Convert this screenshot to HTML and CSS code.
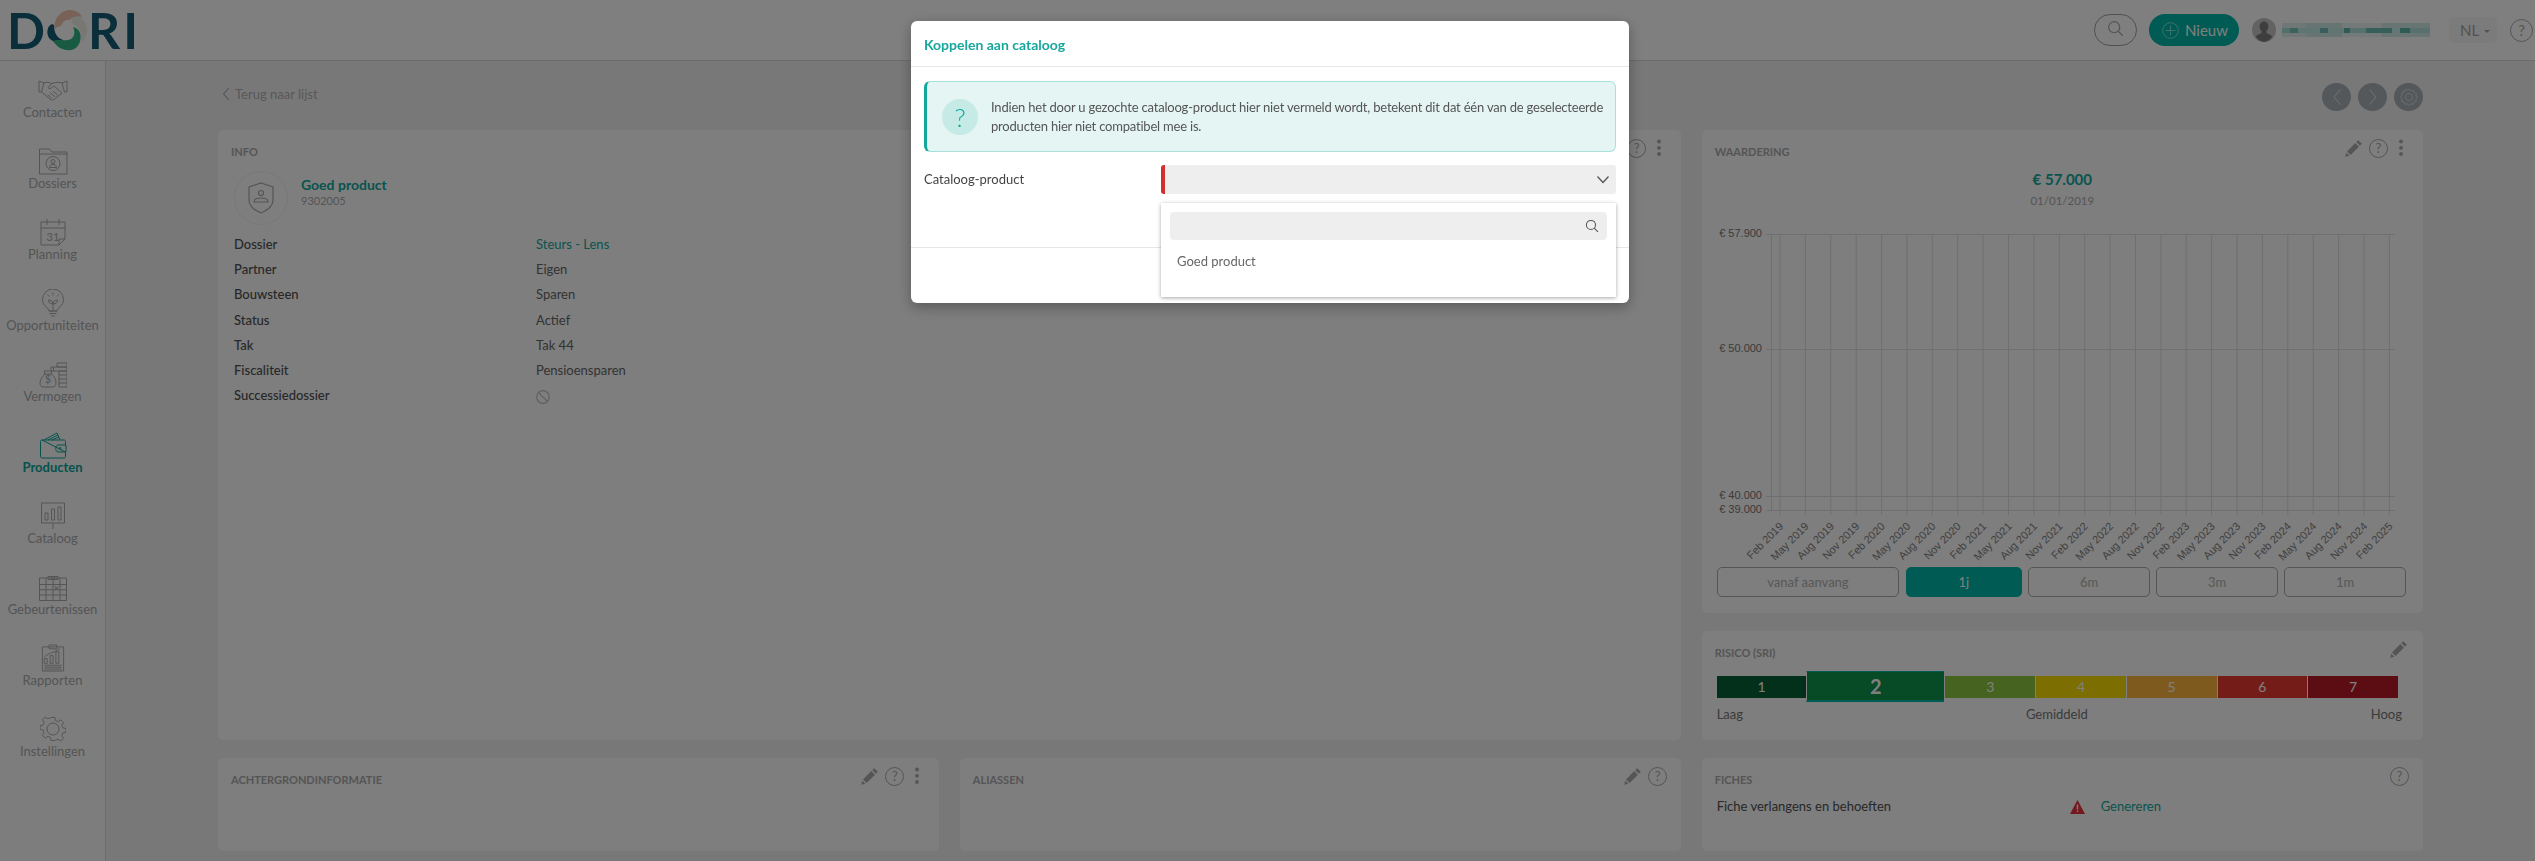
FILE: index.html
```html
<!DOCTYPE html>
<html lang="nl">
<head>
    <meta charset="UTF-8">
    <title>Koppelen aan cataloog</title>
    <link rel="stylesheet" href="styles.css">
</head>
<body>

    <svg class="sprites" width="0" height="0">
        <symbol id="pencil" viewBox="0 0 20 20"><path d="M14.2 2.2l3.6 3.6-1.9 1.9-3.6-3.6zM11.3 5.1l3.6 3.6-8.3 8.3-3.6-3.6zM2.2 14.7l3.1 3.1-4.1 1z"/></symbol>
        <symbol id="dots" viewBox="0 0 16 20"><circle cx="8" cy="3.5" r="1.9"/><circle cx="8" cy="9.8" r="1.9"/><circle cx="8" cy="16" r="1.9"/></symbol>
        <symbol id="glass" viewBox="0 0 20 20"><circle cx="8.5" cy="8.5" r="6.5"/><path d="M13.2 13.2l5.3 5.3"/></symbol>
        <symbol id="left" viewBox="0 0 12 20"><path d="M9.5 2.5L3 10l6.5 7.5"/></symbol>
        <symbol id="right" viewBox="0 0 12 20"><path d="M2.5 2.5L9 10l-6.5 7.5"/></symbol>
    </svg>

    <header class="topbar">
        <div class="logo">
            <span class="logo-letter">D</span>
            <svg class="logo-ring" width="42" height="42" viewBox="0 0 42 42">
                <path class="ring-grey" d="M30 5C37 8 41 15 41 21C41 27 38 31 35 34C36 28 35 22 31 18C29 16 27 15 25 12Z"/>
                <path class="ring-dark" d="M6 15C1 17 0 24 3 29C6 33 12 34 17 31C11 29 8 24 8 16Z"/>
                <path class="ring-salmon" d="M9 20C7 10 15 1 24 1C30 1 34 4 36 8C31 6 26 8 24 11C20 10 16 13 15 17C13 17 11 18 9 20Z"/>
                <path class="ring-green" d="M7 32C12 40 20 42 25 41C33 40 36 30 34 24C33 21 31 19 27 18C30 24 28 30 22 31C16 32 11 30 7 32Z"/>
            </svg>
            <span class="logo-letter logo-rest">RI</span>
        </div>
        <div class="top-actions">
            <button class="search-pill"><svg class="stroke" width="17" height="17"><use href="#glass"/></svg></button>
            <button class="new-btn">
                <svg class="new-plus" width="17" height="17" viewBox="0 0 17 17"><circle cx="8.500" cy="8.500" r="7.800"/><path d="M8.500 3.500v10M3.500 8.500h10"/></svg>
                Nieuw
            </button>
            <svg class="user-pic" width="24" height="24" viewBox="0 0 24 24">
                <circle cx="12" cy="12" r="12" fill="#c4c4c4"/>
                <path fill="#7c7c7c" d="M12 3.500c3 0 4.500 2.500 4.300 5.300-.1 2-1 3.700-2 4.700v1.500c2.200 1 4.700 1.800 6 3.500A12 12 0 0 1 12 24a12 12 0 0 1-8.300-5.500c1.300-1.700 3.800-2.500 6-3.500v-1.500c-1-1-1.900-2.700-2-4.700C7.500 6 9 3.500 12 3.500z"/>
            </svg>
            <div class="user-name"></div>
            <div class="lang">NL <i class="caret"></i></div>
            <span class="help help-big">?</span>
        </div>
    </header>

    <div class="shell">
        <nav class="sidebar">
            <a class="nav-item">
                <svg class="nav-icon" width="30" height="28" viewBox="0 0 30 28"><path d="M1 5l5 2-2.500 9H1zM29 5l-5 2 2.500 9H29zM6 7c3-1.500 5-.5 8 .5l3.500-1c2.500-.5 4.500 0 6.500.5M14 7.500l-4 4c1 1.500 3 1.300 4.300-.3l2-1 7.700 7M3.500 16l8.500 7c2 1.300 3.300 1 4.300.3l7.700-6M9.500 18.500l4 3.500M12 16.500l5 4.300M15 15l4.500 4"/></svg>
                <span>Contacten</span>
            </a>
            <a class="nav-item">
                <svg class="nav-icon" width="30" height="28" viewBox="0 0 30 28"><path d="M1.500 27V2h10l2.500 3h15M1.500 7h27.500M29 5v22H1.500"/><circle cx="15" cy="16.500" r="7"/><circle cx="15" cy="14.500" r="2"/><path d="M11.500 20.500c0-2 1.500-3 3.500-3s3.500 1 3.500 3z"/></svg>
                <span>Dossiers</span>
            </a>
            <a class="nav-item">
                <svg class="nav-icon" width="28" height="28" viewBox="0 0 28 28"><path d="M2 4h24v17l-6 6H2zM2 10h24M8 1v6M20 1v6M26 21h-6v6"/><text x="14" y="23" class="nav-cal-num">31</text></svg>
                <span>Planning</span>
            </a>
            <a class="nav-item">
                <svg class="nav-icon" width="24" height="28" viewBox="0 0 24 28"><path d="M8 22c0-3-6.500-5-6.500-11.500a10.500 10.500 0 0 1 21 0C22.500 17 16 19 16 22zM8 22h8M8.500 24.500h7M10 27h4M12 21v-8M12 15c-3 0-4.500-1.500-4.500-4 2.500 0 4.500 1 4.500 4zM12 15c3 0 4.500-1.500 4.500-4-2.500 0-4.500 1-4.500 4zM12 3.500v3M6.500 5.500l1.500 2M17.500 5.500L16 7.500"/></svg>
                <span>Opportuniteiten</span>
            </a>
            <a class="nav-item">
                <svg class="nav-icon" width="28" height="28" viewBox="0 0 28 28"><path d="M6 14l-1-3h8l-1 3c3 2 5 5 5 9 0 2-1 4-3 4H4c-2 0-3-2-3-4 0-4 3-7 5-9zM6 14h6M12 7h16v4H12zM18 3h10v4H18zM20 11h8v16h-8zM20 15h8M20 19h8M20 23h8M14.500 7V11"/><text x="9" y="23" class="nav-cal-num">$</text></svg>
                <span>Vermogen</span>
            </a>
            <a class="nav-item active">
                <svg class="nav-icon" width="28" height="28" viewBox="0 0 28 28"><path d="M3 9h22c1 0 1.500.5 1.500 1.500V14M26.500 21v4.500c0 1-.500 1.500-1.500 1.500H3.500C2 27 1.500 26.500 1.500 25V10.500C1.500 9.500 2 9 3 9zM19 14h8v7h-8c-3 0-3-7 0-7zM5 9l13-7 3 7M9 9l10-5M13 9l7-3"/><circle cx="21" cy="17.500" r="1"/></svg>
                <span>Producten</span>
            </a>
            <a class="nav-item">
                <svg class="nav-icon" width="26" height="28" viewBox="0 0 26 28"><path d="M1.500 1h23v20h-23zM13 21v6M5 11h3v7H5zM11.500 7h3v11h-3zM18 5h3v13h-3z"/></svg>
                <span>Cataloog</span>
            </a>
            <a class="nav-item">
                <svg class="nav-icon" width="28" height="28" viewBox="0 0 28 28"><path d="M0.500 5h27v22.500H.5zM.5 11.500h27M.5 16.800h27M.5 22h27M7 5v22.500M14 5v22.500M21 5v22.500M9 3.500h10v3H9zM12.500 3v4M15.500 3v4M15.500 13.500l4 3M19.500 13.500l-4 3"/></svg>
                <span>Gebeurtenissen</span>
            </a>
            <a class="nav-item">
                <svg class="nav-icon" width="24" height="29" viewBox="0 0 24 29"><path d="M1 3h22v25H1zM8 1h8v4H8zM3 20V15h3v5zM9 20V12h3v8zM15 20V8h3v12zM3 13l7-4 4-1 5-3M3 22h18M3 24h18M3 26h18"/></svg>
                <span>Rapporten</span>
            </a>
            <a class="nav-item">
                <svg class="nav-icon" width="26" height="26" viewBox="0 0 26 26"><path d="M11 1h4l.7 3.300 2.600 1 2.900-1.800 2.800 2.800-1.800 2.900 1 2.600 3.300.7v4l-3.300.7-1 2.600 1.800 2.900-2.800 2.800-2.900-1.800-2.600 1L15 25h-4l-.7-3.300-2.600-1-2.900 1.800L2 19.700l1.800-2.900-1-2.600L-.5 13.500v-4l3.300-.7 1-2.600L2 3.300 4.800.5l2.900 1.800 2.600-1z" transform="translate(.5 .5) scale(.96)"/><circle cx="13" cy="13" r="6"/></svg>
                <span>Instellingen</span>
            </a>
        </nav>

        <main class="content">
            <div class="toolbar">
                <a class="back"><svg class="stroke" width="10" height="16"><use href="#left"/></svg> Terug naar lijst</a>
                <div class="round-btns">
                    <button class="round-btn"><svg class="stroke-light" width="12" height="20"><use href="#left"/></svg></button>
                    <button class="round-btn"><svg class="stroke-light" width="12" height="20"><use href="#right"/></svg></button>
                    <button class="round-btn">
                        <svg class="round-gear" width="18" height="18" viewBox="0 0 18 18"><circle cx="9" cy="9" r="3.500"/><path d="M9 1l1.800 1.700 2.400-.4.800 2.300 2.300.8-.4 2.400L17.500 9l-1.600 1.800.4 2.400-2.300.8-.8 2.300-2.400-.4L9 17.500l-1.800-1.600-2.400.4-.8-2.300-2.300-.8.4-2.400L.5 9l1.600-1.800-.4-2.400 2.300-.8.8-2.300 2.400.4z"/></svg>
                    </button>
                </div>
            </div>

            <div class="cards">
                <section class="card card-info">
                    <div class="card-head">
                        <h2>INFO</h2>
                        <div class="tools">
                            <svg class="tool-pencil" width="20" height="20"><use href="#pencil"/></svg>
                            <span class="help">?</span>
                            <svg class="tool-dots" width="16" height="20"><use href="#dots"/></svg>
                        </div>
                    </div>
                    <div class="product">
                        <div class="product-pic">
                            <svg class="product-shield" width="26" height="32" viewBox="0 0 26 32"><path d="M13 1l12 4v13c0 6-5 10-12 13C6 28 1 24 1 18V5z"/><circle cx="13" cy="11" r="2.500"/><path d="M6 20c0-3 3-4 7-4s7 1 7 4z"/></svg>
                        </div>
                        <div>
                            <div class="product-name">Goed product</div>
                            <div class="product-nr">9302005</div>
                        </div>
                    </div>
                    <dl class="facts">
                        <dt>Dossier</dt><dd class="link">Steurs - Lens</dd>
                        <dt>Partner</dt><dd>Eigen</dd>
                        <dt>Bouwsteen</dt><dd>Sparen</dd>
                        <dt>Status</dt><dd>Actief</dd>
                        <dt>Tak</dt><dd>Tak 44</dd>
                        <dt>Fiscaliteit</dt><dd>Pensioensparen</dd>
                        <dt>Successiedossier</dt>
                        <dd><svg class="ban" width="14" height="14" viewBox="0 0 14 14"><circle cx="7" cy="7" r="6.300"/><path d="M2.600 2.600l8.800 8.800"/></svg></dd>
                    </dl>
                </section>

                <section class="card card-value">
                    <div class="card-head">
                        <h2>WAARDERING</h2>
                        <div class="tools">
                            <svg class="tool-pencil" width="20" height="20"><use href="#pencil"/></svg>
                            <span class="help">?</span>
                            <svg class="tool-dots" width="16" height="20"><use href="#dots"/></svg>
                        </div>
                    </div>
                    <div class="value">€ 57.000</div>
                    <div class="value-date">01/01/2019</div>
                    <svg class="chart" width="721" height="340" viewBox="0 0 721 340">
                        <g class="grid">
                            <path d="M69.500 9V285M78 9V290M103.400 9V290M128.800 9V290M154.200 9V290M179.600 9V290M205 9V290M230.300 9V290M255.700 9V290M281.100 9V290M306.500 9V290M331.900 9V290M357.300 9V290M382.700 9V290M408.100 9V290M433.500 9V290M458.900 9V290M484.200 9V290M509.600 9V290M535 9V290M560.400 9V290M585.800 9V290M611.200 9V290M636.600 9V290M662 9V290M687.400 9V290"/>
                            <path d="M64 9.500H693M64 124.500H693M64 271.500H693M64 285.500H693"/>
                        </g>
                        <g class="y-labels">
                            <text x="60" y="12">€ 57.900</text>
                            <text x="60" y="127">€ 50.000</text>
                            <text x="60" y="274">€ 40.000</text>
                            <text x="60" y="288">€ 39.000</text>
                        </g>
                        <g class="x-labels">
                            <text transform="translate(82 302) rotate(-45)">Feb 2019</text>
                            <text transform="translate(107.400 302) rotate(-45)">May 2019</text>
                            <text transform="translate(132.800 302) rotate(-45)">Aug 2019</text>
                            <text transform="translate(158.200 302) rotate(-45)">Nov 2019</text>
                            <text transform="translate(183.600 302) rotate(-45)">Feb 2020</text>
                            <text transform="translate(209 302) rotate(-45)">May 2020</text>
                            <text transform="translate(234.300 302) rotate(-45)">Aug 2020</text>
                            <text transform="translate(259.700 302) rotate(-45)">Nov 2020</text>
                            <text transform="translate(285.100 302) rotate(-45)">Feb 2021</text>
                            <text transform="translate(310.500 302) rotate(-45)">May 2021</text>
                            <text transform="translate(335.900 302) rotate(-45)">Aug 2021</text>
                            <text transform="translate(361.300 302) rotate(-45)">Nov 2021</text>
                            <text transform="translate(386.700 302) rotate(-45)">Feb 2022</text>
                            <text transform="translate(412.100 302) rotate(-45)">May 2022</text>
                            <text transform="translate(437.500 302) rotate(-45)">Aug 2022</text>
                            <text transform="translate(462.900 302) rotate(-45)">Nov 2022</text>
                            <text transform="translate(488.200 302) rotate(-45)">Feb 2023</text>
                            <text transform="translate(513.600 302) rotate(-45)">May 2023</text>
                            <text transform="translate(539 302) rotate(-45)">Aug 2023</text>
                            <text transform="translate(564.400 302) rotate(-45)">Nov 2023</text>
                            <text transform="translate(589.800 302) rotate(-45)">Feb 2024</text>
                            <text transform="translate(615.200 302) rotate(-45)">May 2024</text>
                            <text transform="translate(640.600 302) rotate(-45)">Aug 2024</text>
                            <text transform="translate(666 302) rotate(-45)">Nov 2024</text>
                            <text transform="translate(691.400 302) rotate(-45)">Feb 2025</text>
                        </g>
                    </svg>
                    <div class="ranges">
                        <button class="range">vanaf aanvang</button>
                        <button class="range active">1j</button>
                        <button class="range">6m</button>
                        <button class="range">3m</button>
                        <button class="range">1m</button>
                    </div>
                </section>

                <section class="card card-risk">
                    <div class="card-head">
                        <h2>RISICO (SRI)</h2>
                        <div class="tools">
                            <svg class="tool-pencil" width="20" height="20"><use href="#pencil"/></svg>
                        </div>
                    </div>
                    <div class="risk-bar">
                        <div class="risk r1">1</div>
                        <div class="risk r2">2</div>
                        <div class="risk r3">3</div>
                        <div class="risk r4">4</div>
                        <div class="risk r5">5</div>
                        <div class="risk r6">6</div>
                        <div class="risk r7">7</div>
                    </div>
                    <div class="risk-legend"><span>Laag</span><span>Gemiddeld</span><span>Hoog</span></div>
                </section>

                <section class="card">
                    <div class="card-head">
                        <h2>ACHTERGRONDINFORMATIE</h2>
                        <div class="tools">
                            <svg class="tool-pencil" width="20" height="20"><use href="#pencil"/></svg>
                            <span class="help">?</span>
                            <svg class="tool-dots" width="16" height="20"><use href="#dots"/></svg>
                        </div>
                    </div>
                </section>

                <section class="card">
                    <div class="card-head">
                        <h2>ALIASSEN</h2>
                        <div class="tools">
                            <svg class="tool-pencil" width="20" height="20"><use href="#pencil"/></svg>
                            <span class="help">?</span>
                        </div>
                    </div>
                </section>

                <section class="card">
                    <div class="card-head">
                        <h2>FICHES</h2>
                        <div class="tools"><span class="help">?</span></div>
                    </div>
                    <div class="fiche-row">
                        <span class="fiche-name">Fiche verlangens en behoeften</span>
                        <svg class="warn" width="15" height="14" viewBox="0 0 15 14"><path d="M7.500 0L15 14H0z"/><path class="warn-mark" d="M6.800 4.500h1.400v5H6.800zM6.800 10.500h1.400V12H6.800z"/></svg>
                        <a class="link">Genereren</a>
                    </div>
                </section>
            </div>
        </main>
    </div>

    <div class="overlay"></div>

    <div class="modal">
        <div class="modal-head">Koppelen aan cataloog</div>
        <div class="modal-body">
            <div class="notice">
                <span class="notice-icon">?</span>
                <p>Indien het door u gezochte cataloog-product hier niet vermeld wordt, betekent dit dat één van de geselecteerde producten hier niet compatibel mee is.</p>
            </div>
            <div class="field">
                <label>Cataloog-product</label>
                <div class="select">
                    <svg class="chevron" width="14" height="9" viewBox="0 0 14 9"><path d="M1.500 1.500L7 7.500l5.500-6"/></svg>
                    <div class="dropdown">
                        <div class="dropdown-search">
                            <svg class="glass-dark" width="14" height="14" viewBox="0 0 20 20"><use href="#glass"/></svg>
                        </div>
                        <div class="dropdown-item">Goed product</div>
                    </div>
                </div>
            </div>
        </div>
        <div class="modal-foot"></div>
    </div>

</body>
</html>
```

FILE: styles.css
```css
body {
    margin: 0; height: 861px; overflow: hidden;
    background: #f0f0f0;
    font-family: 'Lato', sans-serif;
    font-size: 13px; color: #555;
}

.sprites { position: absolute; }
button { font-family: inherit; cursor: pointer; }

/* Dim layer + modal */
.overlay { position: fixed; top: 0; right: 0; bottom: 0; left: 0; background: rgba(0,0,0,0.5); z-index: 50; }

.modal {
    position: fixed; top: 21px; left: 911px; z-index: 60;
    width: 718px; height: 282px;
    background: #fff; border-radius: 6px;
    box-shadow: 0 4px 14px rgba(0,0,0,0.3);
}
.modal-head {
    height: 46px; box-sizing: border-box; padding: 15px 13px 0;
    border-bottom: 1px solid #e6e6e6;
    color: #17a79d; font-weight: 700; font-size: 14px;
}
.modal-body { height: 180px; box-sizing: border-box; padding: 14px 13px 0; }
.modal-foot { border-top: 1px solid #e6e6e6; }

.notice {
    display: flex; align-items: center; gap: 13px;
    height: 71px; box-sizing: border-box; padding: 0 6px 0 15px;
    background: #e4f5f3; border: 1px solid #a8e0da; border-left: 3px solid #12a89d;
    border-radius: 6px;
}
.notice-icon {
    flex: none; width: 36px; height: 36px; border-radius: 50%;
    background: #c6ebe7; color: #12a89d;
    font-size: 26px; font-weight: 300; line-height: 36px; text-align: center;
}
.notice p { margin: 0; font-size: 13px; line-height: 19px; color: #555; letter-spacing: -0.2px; }

.field { display: flex; margin-top: 13px; }
.field label { width: 237px; flex: none; line-height: 29px; color: #444; }
.select {
    position: relative; width: 455px; height: 29px; box-sizing: border-box;
    background: #eee; border-left: 4px solid #d32f2f; border-radius: 3px;
}
.chevron { position: absolute; right: 6px; top: 10px; fill: none; stroke: #555; stroke-width: 1.3; }
.dropdown {
    position: absolute; left: -4px; top: 38px; width: 455px; height: 94px;
    box-sizing: border-box; padding: 9px;
    background: #fff; box-shadow: 0 1px 4px rgba(0,0,0,0.35);
}
.dropdown-search { position: relative; height: 28px; background: #eee; border-radius: 4px; }
.glass-dark { position: absolute; right: 8px; top: 7px; fill: none; stroke: #555; stroke-width: 1.5; }
.dropdown-item { padding: 13px 7px; font-size: 13px; line-height: 16px; color: #666; }

/* Top bar */
.topbar {
    height: 60px; display: flex; justify-content: space-between; align-items: center;
    background: #fff; border-bottom: 1px solid #d8d8d8;
}
.logo { display: flex; align-items: center; padding-left: 7px; }
.logo-letter { font-size: 50px; font-weight: 700; line-height: 50px; color: #165e74; }
.logo-rest { letter-spacing: 3px; margin-left: 0; }
.logo-ring { margin: 0 0 0 1px; }
.ring-grey { fill: #efefe6; }
.ring-dark { fill: #165e74; }
.ring-salmon { fill: #f0c2ae; }
.ring-green { fill: #32b684; }

.top-actions { display: flex; align-items: center; height: 100%; padding-right: 2px; }
.search-pill {
    width: 43px; height: 32px; padding: 0; margin-right: 12px;
    background: transparent; border: 1px solid #a0a0a0; border-radius: 16px;
}
.stroke { fill: none; stroke: #a8a8a8; stroke-width: 1.4; }
.new-btn {
    display: flex; align-items: center; gap: 6px;
    width: 90px; height: 32px; padding: 0 0 0 13px; margin-right: 13px;
    background: #00b6a8; color: #fff; border: none; border-radius: 16px;
    font-size: 15px;
}
.new-plus { fill: none; stroke: #7fe0d6; stroke-width: 1; }
.user-pic { margin-right: 6px; }
.user-name {
    width: 148px; height: 14px; margin-right: 19px;
    background:
        linear-gradient(to right, #a8dcd8 0 8px, #78c4bc 8px 16px, #c0e8e4 16px 38px, #70bab4 38px 46px, #c0e8e4 46px 62px, #60b4ac 62px 68px, #b0e0dc 68px 84px, #6cbcb4 84px 110px, #c8ecea 110px 118px, #60b4ac 118px 128px, #b0e0dc 128px 148px) 0 5px / 100% 5px no-repeat,
        linear-gradient(to right, #e0f0ee 0 24px, #cce8e4 24px 60px, #e8f4f2 60px 100px, #d0eae6 100px 148px);
}
.lang {
    width: 48px; height: 26px; margin-right: 13px; box-sizing: border-box;
    padding-left: 11px; line-height: 26px;
    background: #f6f6f6; border-radius: 5px;
    font-size: 15px; color: #a4a4a4;
}
.caret {
    display: inline-block; margin-left: 1px; vertical-align: 3px;
    border-top: 3px solid #a4a4a4; border-left: 3px solid transparent; border-right: 3px solid transparent;
}
.help {
    display: inline-block; width: 19px; height: 19px; flex: none; box-sizing: border-box;
    border: 1px solid #aaa; border-radius: 50%;
    font-size: 13px; line-height: 17px; text-align: center; color: #aaa;
}
.help-big { width: 23px; height: 23px; font-size: 15px; line-height: 21px; }

.shell { display: flex; height: 800px; }

/* Sidebar */
.sidebar {
    width: 106px; flex: none; box-sizing: border-box; padding-top: 15px;
    display: flex; flex-direction: column; gap: 26px;
    background: #fafafa; border-right: 1px solid #d8d8d8;
}
.nav-item { display: flex; flex-direction: column; align-items: center; color: #aaa; line-height: 17px; height: 45px; white-space: nowrap; }
.nav-icon { height: 28px; fill: none; stroke: #aaa; stroke-width: 1; }
.nav-cal-num { font-size: 11px; fill: #aaa; stroke: none; text-anchor: middle; }
.nav-item.active { color: #0aa598; font-weight: 700; }
.nav-item.active .nav-icon { stroke: #0aa598; }

/* Content */
.content { flex: 1; padding: 0 112px; }
.toolbar { height: 69px; display: flex; justify-content: space-between; }
.back { display: flex; align-items: center; gap: 4px; height: 66px; margin-left: 3px; color: #b2b2b2; }
.round-btns { display: flex; gap: 7px; padding-top: 22px; }
.round-btn { width: 29px; height: 28px; padding: 0; background: #aab0b6; border: none; border-radius: 50%; }
.stroke-light { fill: none; stroke: #fff; stroke-width: 1; vertical-align: middle; opacity: 0.7; }
.round-gear { fill: none; stroke: #fff; stroke-width: 1; vertical-align: middle; opacity: 0.5; }

.cards {
    display: grid; gap: 18px 20.500px;
    grid-template-columns: repeat(3, 1fr);
    grid-template-rows: 483px 109px 93px;
}
.card { background: #fcfcfc; border-radius: 5px; }
.card-info { grid-column: 1 / span 2; grid-row: 1 / span 2; }
.card-value { grid-column: 3; grid-row: 1; }
.card-risk { grid-column: 3; grid-row: 2; }

.card-head { display: flex; justify-content: space-between; padding: 8px 14px 0 13px; height: 22px; }
.card-head h2 { margin: 5px 0 0; font-size: 11px; font-weight: 700; line-height: 17px; color: #aaa; }
.tools { display: flex; align-items: center; gap: 5px; height: 20px; }
.tool-pencil { fill: #aaa; }
.tool-dots { fill: #aaa; }

.product { display: flex; align-items: center; gap: 13px; margin: 11px 0 0 16px; }
.product-pic {
    width: 54px; height: 54px; box-sizing: border-box; border-radius: 50%;
    border: 1px solid #f0f0f0;
    display: flex; align-items: center; justify-content: center;
}
.product-shield { fill: none; stroke: #aaa; stroke-width: 1.2; }
.product-name { font-size: 14px; font-weight: 700; color: #12a89d; line-height: 19px; margin-top: -13px; }
.product-nr { font-size: 11px; color: #aaa; line-height: 14px; }

.facts { display: grid; grid-template-columns: 302px 1fr; grid-auto-rows: 25.200px; margin: 7px 0 0 16px; }
.facts dt { color: #505050; font-weight: 500; line-height: 25px; }
.facts dd { margin: 0; color: #666; line-height: 25px; }
.link { color: #12a89d !important; }
.ban { fill: none; stroke: #c0c0c0; stroke-width: 1.2; vertical-align: -4px; }

.value { margin-top: 9px; text-align: center; font-size: 15px; font-weight: 700; line-height: 20px; color: #12a89d; }
.value-date { margin-top: 4px; text-align: center; font-size: 11.500px; line-height: 16px; color: #aaa; }
.chart { display: block; margin-top: 16px; }
.grid path { fill: none; stroke: #dedede; stroke-width: 1; }
.y-labels text { font: 11px 'Liberation Sans', sans-serif; text-anchor: end; fill: #777; }
.x-labels text { font: 11px 'Liberation Sans', sans-serif; text-anchor: end; fill: #808080; }

.ranges { display: flex; gap: 6.500px; margin: 2px 17px 0 15px; }
.range {
    flex: 121.500px 1 1; height: 30px; padding: 0;
    background: transparent; border: 1px solid #aaa; border-radius: 5px;
    font-size: 13px; color: #b0b0b0;
}
.range:first-child { flex-basis: 182.500px; }
.range:nth-child(2) { flex-basis: 116px; }
.range.active { background: #00b6a8; border-color: #00b6a8; color: #fff; }

.risk-bar { display: flex; align-items: center; height: 31px; margin: 10px 25px 0 15px; }
.risk { flex: 1; height: 22px; line-height: 22px; text-align: center; color: #fff; border-left: 1px solid #fff; box-sizing: border-box; font-size: 14px; }
.risk.r1 { border-left: none; background: #046034; }
.risk.r2 {
    flex: none; width: 138px; height: 31px; line-height: 29px; font-size: 20px; font-weight: 700;
    background: #0c944c; border-top: 1px solid #00b6a8; border-bottom: 2px solid #00b6a8;
}
.risk.r3 { background: #8cc83e; }
.risk.r4 { background: #f8dc00; }
.risk.r5 { background: #ffb43e; }
.risk.r6 { background: #e83a30; }
.risk.r7 { background: #b81a28; }
.risk-legend { display: flex; justify-content: space-between; margin: 4px 21px 0 15px; line-height: 17px; color: #777; }

.fiche-row { display: flex; align-items: center; margin: 10px 0 0 15px; line-height: 17px; }
.fiche-name { width: 353px; color: #505050; }
.warn { fill: #e8333a; margin-right: 16px; }
.warn-mark { fill: #fff; }
```
